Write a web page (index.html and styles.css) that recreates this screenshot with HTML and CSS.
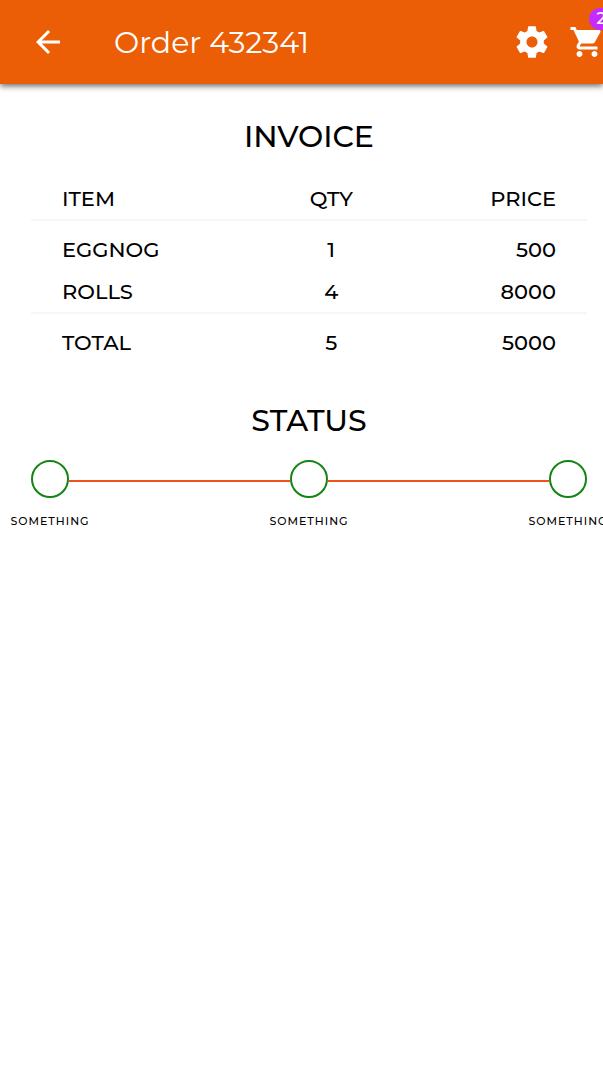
FILE: index.html
```html
<!DOCTYPE html>
<html lang="en">
<head>
<meta charset="utf-8">
<meta name="viewport" content="width=device-width, initial-scale=1">
<title>Order 432341</title>
<link rel="stylesheet" href="styles.css">
</head>
<body>
<header class="bar">
  <button class="icon-button" type="button" aria-label="Back">
    <svg class="icon" viewBox="0 0 24 24"><path d="M20 11H7.83l5.59-5.59L12 4l-8 8 8 8 1.41-1.41L7.83 13H20v-2z"/></svg>
  </button>
  <h1 class="bar-title">Order 432341</h1>
  <button class="icon-button" type="button" aria-label="Settings">
    <svg class="icon icon-gear" viewBox="0 0 24 24"><path d="M19.43 12.98c.04-.32.07-.64.07-.98s-.03-.66-.07-.98l2.11-1.65c.19-.15.24-.42.12-.64l-2-3.46c-.12-.22-.39-.3-.61-.22l-2.49 1c-.52-.4-1.08-.73-1.69-.98l-.38-2.65C14.46 2.18 14.25 2 14 2h-4c-.25 0-.46.18-.49.42l-.38 2.65c-.61.25-1.17.59-1.69.98l-2.49-1c-.23-.09-.49 0-.61.22l-2 3.46c-.13.22-.07.49.12.64l2.11 1.65c-.04.32-.07.65-.07.98s.03.66.07.98l-2.11 1.65c-.19.15-.24.42-.12.64l2 3.46c.12.22.39.3.61.22l2.49-1c.52.4 1.08.73 1.69.98l.38 2.65c.03.24.24.42.49.42h4c.25 0 .46-.18.49-.42l.38-2.65c.61-.25 1.17-.59 1.69-.98l2.49 1c.23.09.49 0 .61-.22l2-3.46c.12-.22.07-.49-.12-.64l-2.11-1.65zM12 15.5c-1.93 0-3.5-1.57-3.5-3.5s1.57-3.5 3.5-3.5 3.5 1.57 3.5 3.5-1.57 3.5-3.5 3.5z"/></svg>
  </button>
  <button class="icon-button cart" type="button" aria-label="Cart">
    <svg class="icon" viewBox="0 0 24 24"><path d="M7 18c-1.1 0-1.99.9-1.99 2S5.9 22 7 22s2-.9 2-2-.9-2-2-2zM1 2v2h2l3.6 7.59-1.35 2.45c-.16.28-.25.61-.25.96 0 1.1.9 2 2 2h12v-2H7.42c-.14 0-.25-.11-.25-.25l.03-.12.9-1.63h7.45c.75 0 1.41-.41 1.75-1.03l3.58-6.49c.08-.14.12-.31.12-.48 0-.55-.45-1-1-1H5.21l-.94-2H1zm16 16c-1.1 0-1.99.9-1.99 2s.89 2 1.99 2 2-.9 2-2-.9-2-2-2z"/></svg>
    <span class="badge">2</span>
  </button>
</header>
<main class="content">
  <h2 class="heading">INVOICE</h2>
  <table class="invoice">
    <thead>
      <tr><th class="item" scope="col">ITEM</th><th class="qty" scope="col">QTY</th><th class="price" scope="col">PRICE</th></tr>
    </thead>
    <tbody>
      <tr><td class="item">EGGNOG</td><td class="qty">1</td><td class="price">500</td></tr>
      <tr><td class="item">ROLLS</td><td class="qty">4</td><td class="price">8000</td></tr>
    </tbody>
    <tfoot>
      <tr><td class="item">TOTAL</td><td class="qty">5</td><td class="price">5000</td></tr>
    </tfoot>
  </table>
  <h2 class="heading">STATUS</h2>
  <ol class="steps">
    <li class="step"><span class="dot"></span><span class="label">SOMETHING</span></li>
    <li class="link" aria-hidden="true"></li>
    <li class="step"><span class="dot"></span><span class="label">SOMETHING</span></li>
    <li class="link" aria-hidden="true"></li>
    <li class="step"><span class="dot"></span><span class="label">SOMETHING</span></li>
  </ol>
</main>
</body>
</html>
```
FILE: styles.css
```css
* {
  box-sizing: border-box;
}

body {
  margin: 0;
  overflow-x: hidden;
  background: #fff;
  color: #000;
  font-family: Montserrat, Inter, sans-serif;
}

.bar {
  display: flex;
  align-items: center;
  height: 84px;
  padding-left: 30px;
  background: #eb5e06;
  color: #fff;
  box-shadow: 0 2px 6px rgba(0, 0, 0, 0.6);
}

.bar-title {
  flex: 1;
  margin: 0 0 0 48px;
  padding-top: 2px;
  font-size: 30px;
  font-weight: 400;
  line-height: 40px;
}

.icon-button {
  position: relative;
  display: flex;
  flex: none;
  padding: 0;
  border: 0;
  background: none;
  color: inherit;
  font: inherit;
}

.icon {
  width: 36px;
  height: 36px;
  fill: currentColor;
}

.icon-gear {
  width: 38px;
  height: 38px;
}

.cart {
  margin: 0 -2px 0 18px;
}

.badge {
  position: absolute;
  top: -16px;
  left: 20px;
  width: 24px;
  height: 22px;
  border-radius: 11px;
  background: #c52bff;
  font-size: 16px;
  font-weight: 500;
  line-height: 22px;
  text-align: center;
}

.content {
  padding: 33px 16px 0 31px;
}

.heading {
  margin: 0;
  font-size: 30px;
  font-weight: 500;
  line-height: 40px;
  text-align: center;
}

.invoice {
  width: 100%;
  margin: 21px 0 37px;
  border-spacing: 0;
  font-size: 21px;
  font-weight: 500;
  line-height: 26px;
}

.invoice th,
.invoice td {
  padding: 8px 31px;
  font-weight: 500;
}

.invoice th,
.invoice tbody tr:last-child td {
  padding-bottom: 7px;
  border-bottom: 2px solid #f6f6f4;
}

.invoice tbody tr:first-child td,
.invoice tfoot td {
  padding-top: 16px;
}

.invoice .item {
  width: 40%;
  text-align: left;
}

.invoice .qty {
  width: 28%;
  text-align: center;
}

.invoice .price {
  width: 32%;
  text-align: right;
}

.steps {
  display: flex;
  margin: 19px 0 0;
  padding: 0;
  list-style: none;
}

.step {
  display: flex;
  flex: none;
  flex-direction: column;
  align-items: center;
  gap: 15px;
  width: 38px;
}

.dot {
  width: 38px;
  height: 38px;
  border: 2px solid #158415;
  border-radius: 50%;
}

.link {
  flex: 1;
  height: 2px;
  margin-top: 20px;
  background: #f2501c;
}

.label {
  font-size: 11px;
  font-weight: 500;
  letter-spacing: 1px;
  line-height: 16px;
  white-space: nowrap;
}
```
